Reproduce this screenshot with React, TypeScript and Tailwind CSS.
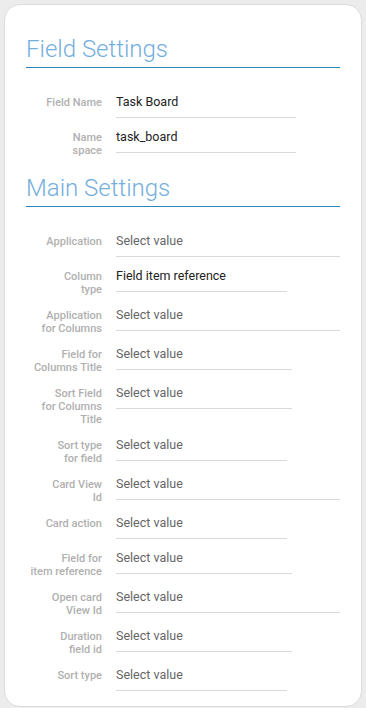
import React from 'react';

type Row = { label: string[]; value?: string; width: string };

const fieldRows: Row[] = [
  { label: ['Field Name'], value: 'Task Board', width: 'w-[180px]' },
  { label: ['Name', 'space'], value: 'task_board', width: 'w-[180px]' },
];

const mainRows: Row[] = [
  { label: ['Application'], width: 'flex-1' },
  { label: ['Column', 'type'], value: 'Field item reference', width: 'w-[171px]' },
  { label: ['Application', 'for Columns'], width: 'flex-1' },
  { label: ['Field for', 'Columns Title'], width: 'w-[176px]' },
  { label: ['Sort Field', 'for Columns', 'Title'], width: 'w-[176px]' },
  { label: ['Sort type', 'for field'], width: 'w-[171px]' },
  { label: ['Card View', 'Id'], width: 'flex-1' },
  { label: ['Card action'], width: 'w-[171px]' },
  { label: ['Field for', 'item reference'], width: 'w-[176px]' },
  { label: ['Open card', 'View Id'], width: 'flex-1' },
  { label: ['Duration', 'field id'], width: 'w-[176px]' },
  { label: ['Sort type'], width: 'w-[171px]' },
];

function SectionTitle({ children, className }: { children: React.ReactNode; className?: string }) {
  return (
    <h2
      className={
        'border-b border-[#2a86b8] pb-[4px] text-[24px] font-light leading-[28px] text-[#74aedd] ' +
        (className ?? '')
      }
    >
      {children}
    </h2>
  );
}

function FieldRow({ row }: { row: Row }) {
  return (
    <div className="mb-[11px] flex items-start">
      <div className="w-[76px] shrink-0 pt-[2px] text-right text-[11px] font-medium leading-[13px] text-[#b0b0b0]">
        {row.label.map((l) => (
          <div key={l}>{l}</div>
        ))}
      </div>
      <div className={'ml-[14px] h-[24px] border-b border-[#d9d9d9] ' + row.width}>
        <div
          className={
            'text-[12.5px] leading-[16px] ' + (row.value ? 'text-[#222222]' : 'text-[#666666]')
          }
        >
          {row.value ?? 'Select value'}
        </div>
      </div>
    </div>
  );
}

export default function App() {
  return (
    <div
      className="min-h-screen bg-[#ececec] p-[4px]"
      style={{ fontFamily: 'Roboto, "Liberation Sans", sans-serif' }}
    >
      <div className="rounded-[16px] border border-[#dcdcdc] bg-white px-[21px] pt-[30px] pb-[4px]">
        <SectionTitle>Field Settings</SectionTitle>
        <div className="mt-[26px]">
          {fieldRows.map((r) => (
            <FieldRow key={r.label.join(' ')} row={r} />
          ))}
        </div>

        {/* last row's mb collapses into this margin */}
        <SectionTitle className="mt-[17px]">Main Settings</SectionTitle>
        <div className="mt-[26px]">
          {mainRows.map((r) => (
            <FieldRow key={r.label.join(' ')} row={r} />
          ))}
        </div>
      </div>
    </div>
  );
}
